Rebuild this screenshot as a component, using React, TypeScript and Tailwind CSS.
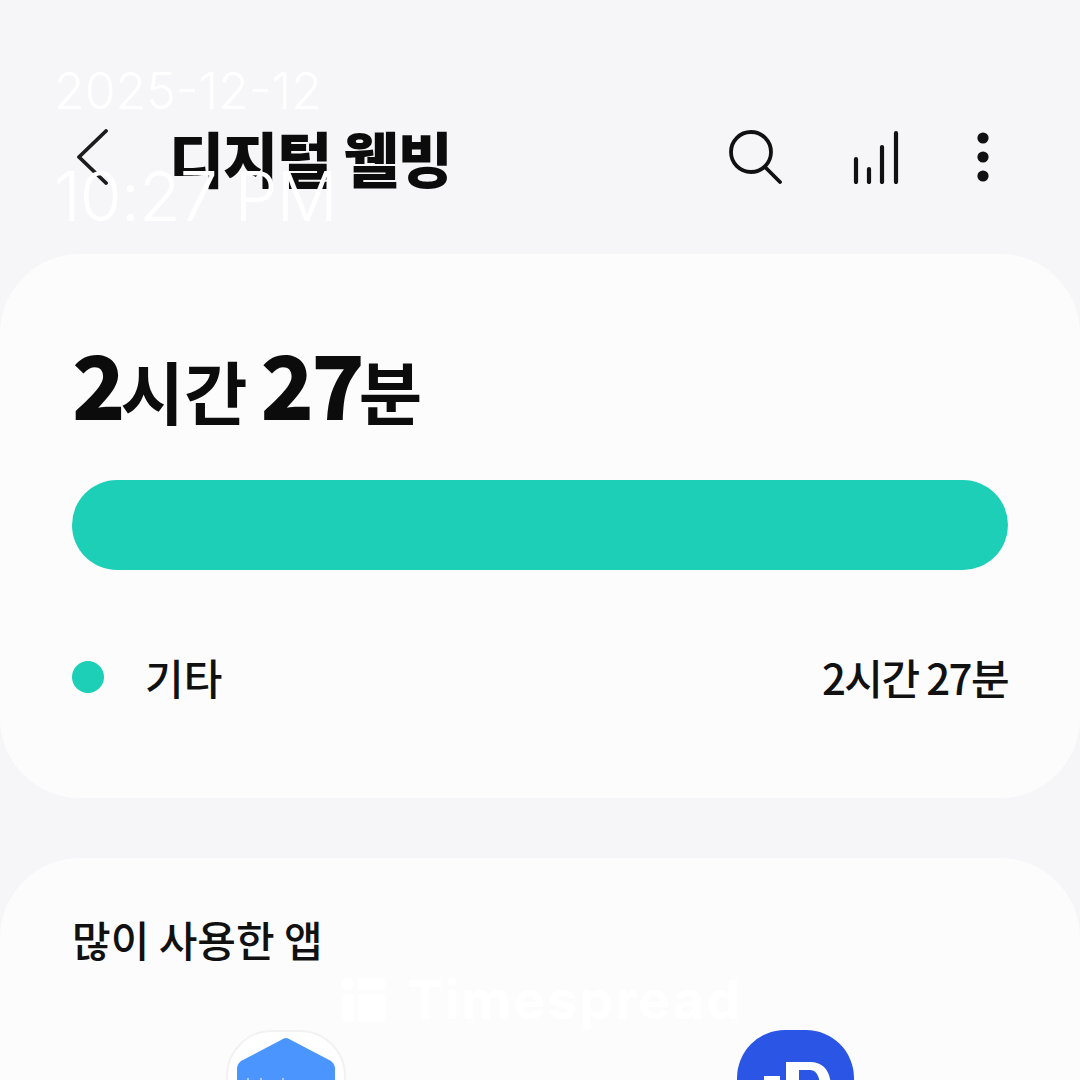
const koFont = "font-['Noto_Sans_CJK_KR','Noto_Sans',sans-serif]";

function BackIcon() {
    return (
        <svg width="32" height="56" viewBox="0 0 32 56" fill="none" stroke="#1c1c1c" strokeWidth="3.8" strokeLinecap="round" strokeLinejoin="round">
            <path d="M30 2 L3 28 L30 54" />
        </svg>
    );
}

function SearchIcon() {
    return (
        <svg width="54" height="54" viewBox="0 0 54 54" fill="none" stroke="#111" strokeWidth="3.8" strokeLinecap="round">
            <circle cx="22" cy="22" r="20" />
            <path d="M36 37 L51 52" />
        </svg>
    );
}

function StatsIcon() {
    return (
        <svg width="46" height="54" viewBox="0 0 46 54" fill="none" stroke="#111" strokeWidth="4.2" strokeLinecap="round">
            <path d="M3 52 V29" />
            <path d="M16 52 V39" />
            <path d="M29 52 V17" />
            <path d="M43 52 V3" />
        </svg>
    );
}

function MoreIcon() {
    return (
        <svg width="16" height="54" viewBox="0 0 16 54" fill="#111">
            <circle cx="8" cy="8" r="5.6" />
            <circle cx="8" cy="27" r="5.6" />
            <circle cx="8" cy="46" r="5.6" />
        </svg>
    );
}

function HexApp() {
    return (
        <div className="flex justify-center w-[120px] h-[120px] rounded-[46px] bg-white border-2 border-[#f2f2f2] pt-[5px]">
            <svg width="100" height="110" viewBox="0 0 100 110">
                <path
                    d="M50 1 Q52 1 55 3 L95 24 Q99 27 99 32 V110 H1 V32 Q1 27 5 24 L45 3 Q48 1 50 1 Z"
                    fill="#4a95ff"
                />
                <path d="M11 41 h2 v4 h-2 Z M24 41 h2 v4 h-2 Z M46 41 h2 v4 h-2 Z" fill="#a9cdff" />
            </svg>
        </div>
    );
}

function BlueApp() {
    return (
        <div className="flex justify-center w-[117px] h-[120px] rounded-[48px] bg-[#2a55e5] pt-[30px]">
            <svg width="72" height="60" viewBox="0 0 72 60">
                <path d="M26 2 H50 C64 2 71 12 71 28 V60 H26 Z" fill="#fff" />
                <path d="M39 10 H50 C57 10 60 18 60 28 V60 H39 Z" fill="#2a55e5" />
                <path d="M4 16 H20 V60 H4 Z" fill="#fff" />
            </svg>
        </div>
    );
}

export default function App() {
    return (
        <div className={`relative h-[1080px] w-[1080px] overflow-hidden bg-[#f6f6f8] ${koFont}`}>
            <header className="flex h-[254px] items-center pt-[60px] pl-[76px] pr-[89px] text-[#0c0c0c]">
                <BackIcon />
                <h1 className="ml-[61px] text-[60px] font-black leading-none tracking-[-1.2px]">디지털 웰빙</h1>
                <div className="ml-auto flex items-center">
                    <SearchIcon />
                    <div className="ml-[70px]">
                        <StatsIcon />
                    </div>
                    <div className="ml-[76px]">
                        <MoreIcon />
                    </div>
                </div>
            </header>

            <section className="h-[544px] rounded-[80px] bg-[#fcfcfc] px-[72px] pt-[84px]">
                <div className="flex h-[110px] items-baseline font-black leading-none text-[#0c0c0c]">
                    <span className="text-[88px] tracking-[-5px]">2</span>
                    <span className="text-[69px] font-bold">시간</span>
                    <span className="ml-[13px] text-[88px] tracking-[-3px]">27</span>
                    <span className="-ml-[3px] text-[69px] font-bold">분</span>
                </div>
                <div className="mt-[32px] h-[90px] rounded-full bg-[#1ecfb8]" />
                <div className="mt-[86px] flex items-center text-[42px] font-medium leading-none text-[#111]">
                    <span className="h-[32px] w-[32px] rounded-full bg-[#1ecfb8]" />
                    <span className="ml-[41px]">기타</span>
                    <span className="ml-auto tracking-[-1.6px]">2시간 27분</span>
                </div>
            </section>

            <section className="mt-[60px] h-[300px] rounded-[80px] bg-[#fcfcfc] px-[72px] pt-[56px]">
                <h2 className="text-[42px] font-medium leading-[50px] text-[#111]">많이 사용한 앱</h2>
                <div className="mt-[66px] flex gap-[391px] pl-[154px]">
                    <HexApp />
                    <BlueApp />
                </div>
            </section>

            {/* capture time stamp and app mark over the screen */}
            <div className="absolute left-[54px] top-[60px] font-['Inter',sans-serif] font-light text-white">
                <p className="text-[50px] leading-[62px]">2025-12-12</p>
                <p className="mt-[34px] text-[68px] leading-[80px] tracking-[-1px]">10:27 PM</p>
            </div>
            <div className="absolute left-[342px] top-[970px] flex items-center gap-[21px] font-['Inter',sans-serif] text-white">
                <div className="grid grid-cols-[12px_28px] grid-rows-[12px_28px] gap-[4px]">
                    <span className="rounded-full bg-white" />
                    <span className="bg-white" />
                    <span className="bg-white" />
                    <span className="bg-white" />
                </div>
                <span className="text-[54px] font-bold leading-[60px] tracking-[2px]">Timespread</span>
            </div>
        </div>
    );
}
